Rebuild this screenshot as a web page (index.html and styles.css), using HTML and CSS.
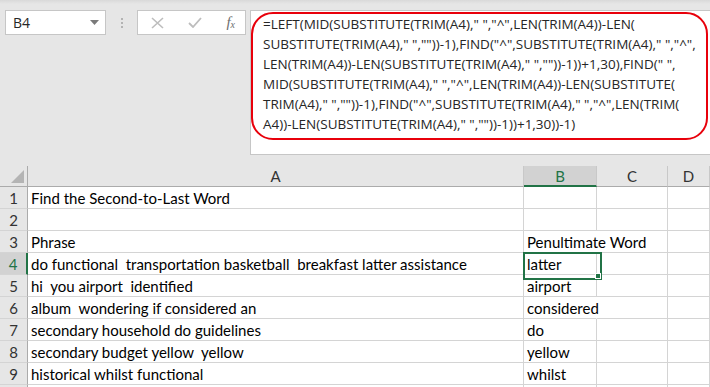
FILE: index.html
```html
<!DOCTYPE html>
<html>
<head>
<meta charset="utf-8">
<link rel="stylesheet" href="styles.css">
</head>
<body>
<div class="app">
  <div class="bar">
    <div class="namebox">
      <span class="ref">B4</span>
      <svg class="caret" width="9" height="5" viewBox="0 0 9 5"><path d="M0 0h9L4.5 5z" fill="#7a7a7a"/></svg>
    </div>
    <div class="grip"><i></i><i></i><i></i></div>
    <div class="fxbox">
      <svg width="13" height="12" viewBox="0 0 13 12"><path d="M1 1l11 10M12 1L1 11" stroke="#bdbdbd" stroke-width="1.6" fill="none"/></svg>
      <svg width="14" height="11" viewBox="0 0 14 11"><path d="M1 6l4 4 8-9" stroke="#bdbdbd" stroke-width="1.8" fill="none"/></svg>
      <span class="fx">f<sub>x</sub></span>
    </div>
    <div class="formula">
      <div class="oval">=LEFT(MID(SUBSTITUTE(TRIM(A4)," ","^",LEN(TRIM(A4))-LEN(<br>SUBSTITUTE(TRIM(A4)," ",""))-1),FIND("^",SUBSTITUTE(TRIM(A4)," ","^",<br>LEN(TRIM(A4))-LEN(SUBSTITUTE(TRIM(A4)," ",""))-1))+1,30),FIND(" ",<br>MID(SUBSTITUTE(TRIM(A4)," ","^",LEN(TRIM(A4))-LEN(SUBSTITUTE(<br>TRIM(A4)," ",""))-1),FIND("^",SUBSTITUTE(TRIM(A4)," ","^",LEN(TRIM(<br>A4))-LEN(SUBSTITUTE(TRIM(A4)," ",""))-1))+1,30))-1)</div>
    </div>
  </div>
  <div class="sheet">
    <div class="ch corner"><span class="tri"></span></div>
    <div class="ch">A</div>
    <div class="ch sel">B</div>
    <div class="ch">C</div>
    <div class="ch">D</div>

    <div class="rh">1</div><div class="c">Find the Second-to-Last Word</div><div class="c"></div><div class="c"></div><div class="c"></div>
    <div class="rh">2</div><div class="c"></div><div class="c"></div><div class="c"></div><div class="c"></div>
    <div class="rh">3</div><div class="c">Phrase</div><div class="c ovf">Penultimate Word</div><div class="c"></div><div class="c"></div>
    <div class="rh rsel">4</div><div class="c">do functional&nbsp; transportation basketball&nbsp; breakfast latter assistance</div><div class="c active">latter<span class="handle"></span></div><div class="c"></div><div class="c"></div>
    <div class="rh">5</div><div class="c">hi&nbsp; you airport&nbsp; identified</div><div class="c">airport</div><div class="c"></div><div class="c"></div>
    <div class="rh">6</div><div class="c">album&nbsp; wondering if considered an</div><div class="c ovf">considered</div><div class="c"></div><div class="c"></div>
    <div class="rh">7</div><div class="c">secondary household do guidelines</div><div class="c">do</div><div class="c"></div><div class="c"></div>
    <div class="rh">8</div><div class="c">secondary budget yellow&nbsp; yellow</div><div class="c">yellow</div><div class="c"></div><div class="c"></div>
    <div class="rh">9</div><div class="c">historical whilst functional</div><div class="c">whilst</div><div class="c"></div><div class="c"></div>
    <div class="rh"></div><div class="c"></div><div class="c"></div><div class="c"></div><div class="c"></div>
  </div>
</div>
</body>
</html>
```
FILE: styles.css
```css
* { box-sizing: border-box; }
html, body { margin: 0; padding: 0; }
body {
  width: 710px;
  height: 387px;
  overflow: hidden;
  background: #e6e6e6;
  font-family: "Open Sans", "Noto Sans", sans-serif;
}
.app { width: 710px; }
.bar {
  height: 166px;
  display: flex;
  align-items: flex-start;
  padding-top: 10px;
  background: linear-gradient(#d9d9d9, #e6e6e6 4px);
}
.namebox {
  margin-left: 5px;
  width: 101px;
  height: 25px;
  background: #fff;
  border: 1px solid #c6c6c6;
  display: flex;
  align-items: center;
  justify-content: space-between;
  padding: 0 6px 0 7px;
  font-size: 14px;
  color: #262626;
}
.grip {
  width: 31px;
  height: 25px;
  display: flex;
  flex-direction: column;
  align-items: center;
  justify-content: center;
  gap: 2px;
}
.grip i { width: 2px; height: 2px; background: #b3b3b3; display: block; }
.fxbox {
  width: 109px;
  height: 25px;
  background: #fff;
  border: 1px solid #c6c6c6;
  display: flex;
  align-items: center;
  justify-content: space-between;
  padding: 0 10px 0 13px;
}
.fx {
  font-family: "Liberation Serif", serif;
  font-style: italic;
  font-size: 15px;
  color: #6e6e6e;
  line-height: 1;
}
.fx sub { font-size: 10px; vertical-align: -1px; }
.formula {
  margin-left: 4px;
  flex: 1;
  height: 145px;
  background: #fff;
  border: 1px solid #c6c6c6;
  border-right: none;
  padding: 1px 2px 0 0;
}
.oval {
  border: 2px solid #e8000b;
  border-radius: 22px;
  height: 128px;
  padding: 0 0 0 10px;
  font-size: 13.5px;
  line-height: 20px;
  color: #262626;
  white-space: nowrap;
}
.sheet {
  display: grid;
  grid-template-columns: 28px 496px 73px 71px 42px;
  grid-template-rows: 21px;
  grid-auto-rows: 22px;
  font-family: "Lato", sans-serif;
  font-size: 15px;
  background: #fff;
}
.ch {
  background: #e6e6e6;
  border-right: 1px solid #c8c8c8;
  border-bottom: 1px solid #ababab;
  text-align: center;
  color: #333;
  line-height: 20px;
}
.ch.corner { border-right: 1px solid #ababab; position: relative; }
.tri {
  position: absolute;
  right: 3px;
  bottom: 3px;
  width: 0;
  height: 0;
  border-left: 13px solid transparent;
  border-bottom: 13px solid #b4b4b4;
}
.ch.sel {
  background: #d2d2d2;
  color: #217346;
  border-bottom: 2px solid #217346;
}
.rh {
  background: #e6e6e6;
  border-right: 1px solid #ababab;
  border-bottom: 1px solid #d4d4d4;
  text-align: center;
  color: #333;
  line-height: 22px;
}
.rh.rsel {
  background: #d2d2d2;
  color: #217346;
  border-right: 2px solid #217346;
}
.c {
  border-right: 1px solid #d4d4d4;
  border-bottom: 1px solid #d4d4d4;
  padding: 0 3px;
  line-height: 22px;
  white-space: nowrap;
  color: #000;
}
.c.ovf {
  position: relative;
  z-index: 1;
  border-right-color: transparent;
}
.c.active {
  position: relative;
  z-index: 2;
}
.c.active::after {
  content: "";
  position: absolute;
  left: -1px;
  top: -1px;
  width: 75px;
  height: 24px;
  border: 2px solid #217346;
}
.handle {
  position: absolute;
  left: 71px;
  top: 20px;
  width: 6px;
  height: 6px;
  background: #217346;
  border: 1px solid #fff;
  z-index: 3;
}
```
